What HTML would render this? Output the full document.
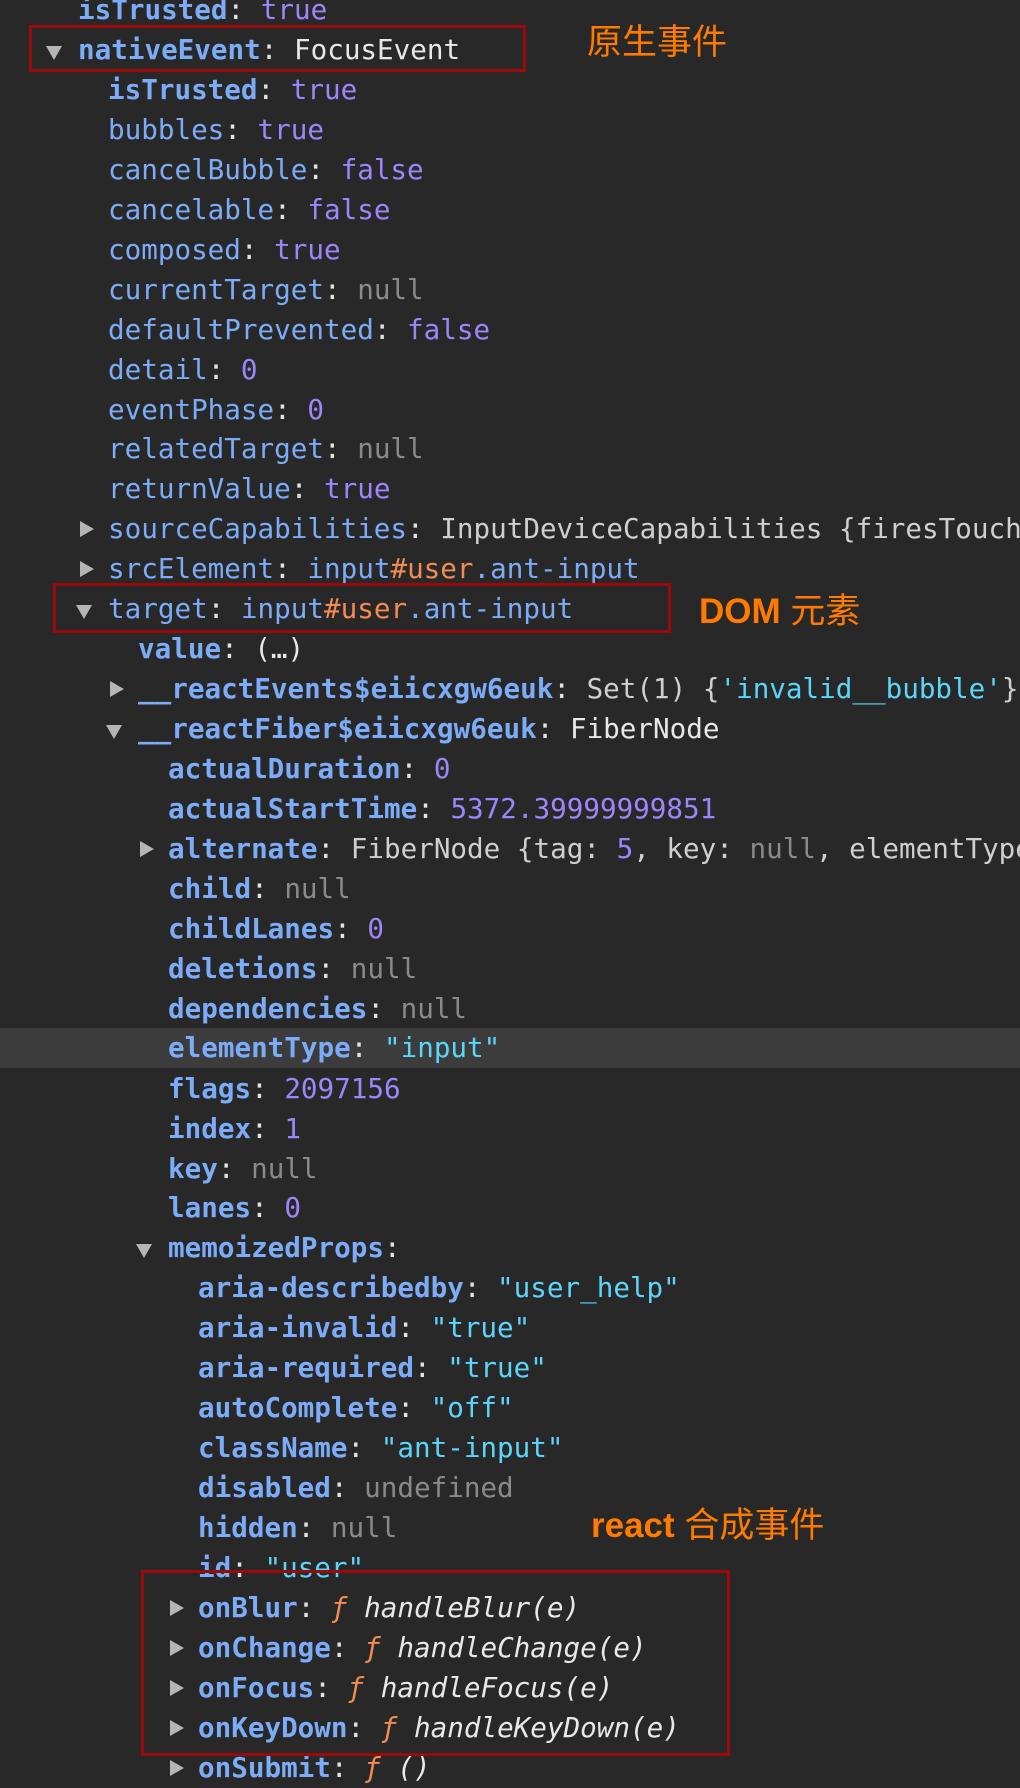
<!DOCTYPE html>
<html><head><meta charset="utf-8"><style>
html,body{margin:0;padding:0;}
body{width:1020px;height:1782px;background:#282828;overflow:hidden;position:relative;font-family:"DejaVu Sans Mono","Liberation Mono",monospace;font-size:27.6px;}
#w{position:absolute;left:0;top:2px;width:1020px;height:1782px}
.r{position:absolute;left:0;width:1020px;height:40px;line-height:40px;white-space:nowrap;overflow:hidden;color:#e3e3e3;}
.k{color:#7cacf8}.b{font-weight:bold}
.p{color:#9d86fb}.n{color:#8a8a8a}.s{color:#5cd5fb}.g{color:#cfcfcf}.o{color:#f28b54}.w{color:#e8e8e8}
.a{display:inline-block;width:0;height:0;border-left:8px solid transparent;border-right:8px solid transparent;border-top:14px solid #b5b5b5;vertical-align:middle;margin-top:-4px;position:absolute}
.c{display:inline-block;width:0;height:0;border-top:8px solid transparent;border-bottom:8px solid transparent;border-left:14px solid #b5b5b5;position:absolute;top:12px}
.box{position:absolute;border:3px solid #9a0a0a;box-sizing:border-box}
.ann{position:absolute;color:#ff7a00;font-family:"Liberation Sans","Noto Sans CJK SC",sans-serif;font-size:35px;line-height:40px;white-space:nowrap}
</style></head><body>
<div id="w">
<div class="r" style="top:-12px"><span style="position:absolute;left:78px"><span class="k b">isTrusted</span>: <span class="p">true</span></span></div>
<div class="r" style="top:28px"><span class="a" style="left:46px;top:20px"></span><span style="position:absolute;left:78px"><span class="k b">nativeEvent</span>: <span class="w">FocusEvent</span></span></div>
<div class="r" style="top:68px"><span style="position:absolute;left:108px"><span class="k b">isTrusted</span>: <span class="p">true</span></span></div>
<div class="r" style="top:108px"><span style="position:absolute;left:108px"><span class="k">bubbles</span>: <span class="p">true</span></span></div>
<div class="r" style="top:148px"><span style="position:absolute;left:108px"><span class="k">cancelBubble</span>: <span class="p">false</span></span></div>
<div class="r" style="top:188px"><span style="position:absolute;left:108px"><span class="k">cancelable</span>: <span class="p">false</span></span></div>
<div class="r" style="top:228px"><span style="position:absolute;left:108px"><span class="k">composed</span>: <span class="p">true</span></span></div>
<div class="r" style="top:268px"><span style="position:absolute;left:108px"><span class="k">currentTarget</span>: <span class="n">null</span></span></div>
<div class="r" style="top:308px"><span style="position:absolute;left:108px"><span class="k">defaultPrevented</span>: <span class="p">false</span></span></div>
<div class="r" style="top:348px"><span style="position:absolute;left:108px"><span class="k">detail</span>: <span class="p">0</span></span></div>
<div class="r" style="top:388px"><span style="position:absolute;left:108px"><span class="k">eventPhase</span>: <span class="p">0</span></span></div>
<div class="r" style="top:427px"><span style="position:absolute;left:108px"><span class="k">relatedTarget</span>: <span class="n">null</span></span></div>
<div class="r" style="top:467px"><span style="position:absolute;left:108px"><span class="k">returnValue</span>: <span class="p">true</span></span></div>
<div class="r" style="top:507px"><span class="c" style="left:80px"></span><span style="position:absolute;left:108px"><span class="k">sourceCapabilities</span>: <span class="g">InputDeviceCapabilities {firesTouchEvents: false}</span></span></div>
<div class="r" style="top:547px"><span class="c" style="left:80px"></span><span style="position:absolute;left:108px"><span class="k">srcElement</span>: <span class="k">input</span><span class="o">#user</span><span class="k">.ant-input</span></span></div>
<div class="r" style="top:587px"><span class="a" style="left:76px;top:20px"></span><span style="position:absolute;left:108px"><span class="k">target</span>: <span class="k">input</span><span class="o">#user</span><span class="k">.ant-input</span></span></div>
<div class="r" style="top:627px"><span style="position:absolute;left:138px"><span class="k b">value</span>: <span class="w"> (…)</span></span></div>
<div class="r" style="top:667px"><span class="c" style="left:110px"></span><span style="position:absolute;left:138px"><span class="k b">__reactEvents$eiicxgw6euk</span>: <span class="g">Set(1) {</span><span class="s">'invalid__bubble'</span><span class="g">}</span></span></div>
<div class="r" style="top:707px"><span class="a" style="left:106px;top:20px"></span><span style="position:absolute;left:138px"><span class="k b">__reactFiber$eiicxgw6euk</span>: <span class="w">FiberNode</span></span></div>
<div class="r" style="top:747px"><span style="position:absolute;left:168px"><span class="k b">actualDuration</span>: <span class="p">0</span></span></div>
<div class="r" style="top:787px"><span style="position:absolute;left:168px"><span class="k b">actualStartTime</span>: <span class="p">5372.39999999851</span></span></div>
<div class="r" style="top:827px"><span class="c" style="left:140px"></span><span style="position:absolute;left:168px"><span class="k b">alternate</span>: <span class="g">FiberNode {tag: </span><span class="p">5</span><span class="g">, key: </span><span class="n">null</span><span class="g">, elementType: "input"}</span></span></div>
<div class="r" style="top:867px"><span style="position:absolute;left:168px"><span class="k b">child</span>: <span class="n">null</span></span></div>
<div class="r" style="top:907px"><span style="position:absolute;left:168px"><span class="k b">childLanes</span>: <span class="p">0</span></span></div>
<div class="r" style="top:947px"><span style="position:absolute;left:168px"><span class="k b">deletions</span>: <span class="n">null</span></span></div>
<div class="r" style="top:987px"><span style="position:absolute;left:168px"><span class="k b">dependencies</span>: <span class="n">null</span></span></div>
<div class="r" style="top:1026px;background:#3c3c3c"><span style="position:absolute;left:168px"><span class="k b">elementType</span>: <span class="s">"input"</span></span></div>
<div class="r" style="top:1067px"><span style="position:absolute;left:168px"><span class="k b">flags</span>: <span class="p">2097156</span></span></div>
<div class="r" style="top:1107px"><span style="position:absolute;left:168px"><span class="k b">index</span>: <span class="p">1</span></span></div>
<div class="r" style="top:1147px"><span style="position:absolute;left:168px"><span class="k b">key</span>: <span class="n">null</span></span></div>
<div class="r" style="top:1186px"><span style="position:absolute;left:168px"><span class="k b">lanes</span>: <span class="p">0</span></span></div>
<div class="r" style="top:1226px"><span class="a" style="left:136px;top:20px"></span><span style="position:absolute;left:168px"><span class="k b">memoizedProps</span>:</span></div>
<div class="r" style="top:1266px"><span style="position:absolute;left:198px"><span class="k b">aria-describedby</span>: <span class="s">"user_help"</span></span></div>
<div class="r" style="top:1306px"><span style="position:absolute;left:198px"><span class="k b">aria-invalid</span>: <span class="s">"true"</span></span></div>
<div class="r" style="top:1346px"><span style="position:absolute;left:198px"><span class="k b">aria-required</span>: <span class="s">"true"</span></span></div>
<div class="r" style="top:1386px"><span style="position:absolute;left:198px"><span class="k b">autoComplete</span>: <span class="s">"off"</span></span></div>
<div class="r" style="top:1426px"><span style="position:absolute;left:198px"><span class="k b">className</span>: <span class="s">"ant-input"</span></span></div>
<div class="r" style="top:1466px"><span style="position:absolute;left:198px"><span class="k b">disabled</span>: <span class="n">undefined</span></span></div>
<div class="r" style="top:1506px"><span style="position:absolute;left:198px"><span class="k b">hidden</span>: <span class="n">null</span></span></div>
<div class="r" style="top:1546px"><span style="position:absolute;left:198px"><span class="k b">id</span>: <span class="s">"user"</span></span></div>
<div class="r" style="top:1586px"><span class="c" style="left:170px"></span><span style="position:absolute;left:198px"><span class="k b">onBlur</span>: <span class="o"><i>ƒ</i></span> <i class="w">handleBlur(e)</i></span></div>
<div class="r" style="top:1626px"><span class="c" style="left:170px"></span><span style="position:absolute;left:198px"><span class="k b">onChange</span>: <span class="o"><i>ƒ</i></span> <i class="w">handleChange(e)</i></span></div>
<div class="r" style="top:1666px"><span class="c" style="left:170px"></span><span style="position:absolute;left:198px"><span class="k b">onFocus</span>: <span class="o"><i>ƒ</i></span> <i class="w">handleFocus(e)</i></span></div>
<div class="r" style="top:1706px"><span class="c" style="left:170px"></span><span style="position:absolute;left:198px"><span class="k b">onKeyDown</span>: <span class="o"><i>ƒ</i></span> <i class="w">handleKeyDown(e)</i></span></div>
<div class="r" style="top:1746px"><span class="c" style="left:170px"></span><span style="position:absolute;left:198px"><span class="k b">onSubmit</span>: <span class="o"><i>ƒ</i></span> <i class="w">()</i></span></div>
</div>
<div class="box" style="left:29px;top:25px;width:497px;height:47px"></div>
<div class="box" style="left:53px;top:583px;width:618px;height:50px"></div>
<div class="box" style="left:141px;top:1570px;width:589px;height:186px"></div>

<div class="ann" style="left:587px;top:23px">原生事件</div>
<div class="ann" style="left:699px;top:592px;font-weight:bold">DOM <span style="font-weight:normal">元素</span></div>
<div class="ann" style="left:591px;top:1506px"><b>react</b> 合成事件</div>
</body></html>
